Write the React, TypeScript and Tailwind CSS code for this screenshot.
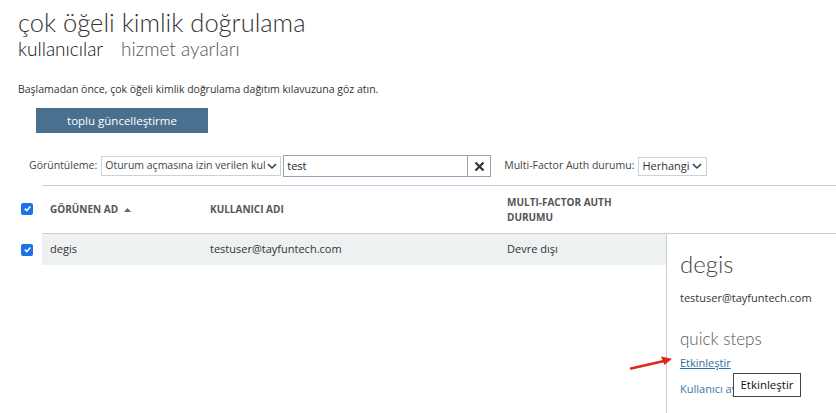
import React from "react";

function Check() {
  return (
    <span className="inline-flex h-[12px] w-[12px] items-center justify-center rounded-[2px] bg-[#1a73e8]">
      <svg width="9" height="9" viewBox="0 0 10 10">
        <path d="M2 5.2 L4.2 7.4 L8.2 2.8" stroke="#fff" strokeWidth="1.8" fill="none" />
      </svg>
    </span>
  );
}

function Chevron() {
  return (
    <svg width="10" height="7" viewBox="0 0 10 7">
      <path d="M1 1.2 L5 5 L9 1.2" stroke="#444" strokeWidth="1.6" fill="none" />
    </svg>
  );
}

export default function App() {
  const font = { fontFamily: '"Segoe UI", "Open Sans", "Noto Sans", sans-serif' };
  const light = { fontFamily: '"Lato", "Open Sans", sans-serif' };
  return (
    <div className="relative h-[413px] w-[836px] overflow-hidden bg-white text-[#333]" style={font}>
      <div className="pl-[18px] pt-[6px]">
        <div className="text-[25.5px] font-light leading-[32px] text-[#333]" style={light}>çok öğeli kimlik doğrulama</div>
        <div className="flex gap-[18px] text-[19px] font-light leading-[22px]" style={light}>
          <span className="text-[#111]">kullanıcılar</span>
          <span className="text-[#555]">hizmet ayarları</span>
        </div>
        <div className="mt-[22px] text-[10.5px] leading-[15px] text-[#333]">
          Başlamadan önce, çok öğeli kimlik doğrulama dağıtım kılavuzuna göz atın.
        </div>
        <div className="ml-[18px] mt-[11px] flex h-[25px] w-[172px] items-center justify-center bg-[#4a7090] text-[11.5px] text-white">
          toplu güncelleştirme
        </div>
      </div>

      <div className="mt-[22px] flex items-center pl-[29px] text-[10.5px] text-[#444]">
        <span>Görüntüleme:</span>
        <div className="ml-[4px] flex h-[20px] w-[180px] items-center justify-between border border-[#c6d3dd] pl-[3px] pr-[3px]">
          <span className="overflow-hidden whitespace-nowrap">Oturum açmasına izin verilen kul</span>
          <span className="shrink-0 pl-[2px]"><Chevron /></span>
        </div>
        <div className="ml-[2px] flex h-[22px] w-[208px] items-stretch border border-[#8fa6ba]">
          <span className="flex-1 pl-[3px] text-[11px] leading-[20px] text-[#222]">test</span>
          <span className="flex w-[23px] items-center justify-center border-l border-[#8fa6ba]">
            <svg width="11" height="11" viewBox="0 0 11 11">
              <path d="M1.5 1.5 L9.5 9.5 M9.5 1.5 L1.5 9.5" stroke="#333" strokeWidth="2.2" />
            </svg>
          </span>
        </div>
        <span className="ml-[13px]">Multi-Factor Auth durumu:</span>
        <div className="ml-[4px] flex h-[19px] w-[69px] items-center justify-between border border-[#c6d3dd] pl-[3px] pr-[4px] text-[11px] text-[#333]">
          <span>Herhangi</span>
          <Chevron />
        </div>
      </div>

      <div className="ml-[42px] mt-[8px] border-t border-[#c8d0d6]" />
      <div className="flex h-[47px] items-center text-[10px] font-bold text-[#555]">
        <div className="w-[42px] pl-[21px]"><Check /></div>
        <div className="flex w-[168px] items-center gap-[6px] pl-[8px]">
          GÖRÜNEN AD
          <svg width="7" height="4" viewBox="0 0 7 4"><path d="M0 4 L3.5 0 L7 4Z" fill="#666" /></svg>
        </div>
        <div className="w-[297px]">KULLANICI ADI</div>
        <div className="w-[140px] leading-[15px]">MULTI-FACTOR AUTH<br />DURUMU</div>
      </div>
      <div className="ml-[42px] border-t border-[#c8d0d6]" />

      <div className="flex">
        <div className="w-[666px] shrink-0">
          <div className="flex h-[31px] items-center text-[11px] text-[#333]">
            <div className="flex w-[42px] pl-[21px]"><Check /></div>
            <div className="flex h-full flex-1 items-center bg-[#eef1f1]">
              <div className="w-[168px] pl-[8px]">degis</div>
              <div className="w-[297px]">testuser@tayfuntech.com</div>
              <div>Devre dışı</div>
            </div>
          </div>
        </div>
        <div className="h-[200px] flex-1 border-l border-[#c8d0d6] pl-[13px] pt-[16px]">
          <div className="text-[24px] font-light leading-[28px] text-[#444]" style={light}>degis</div>
          <div className="mt-[12px] text-[11px] text-[#333]">testuser@tayfuntech.com</div>
          <div className="mt-[21px] text-[17px] font-light leading-[22px] text-[#555]" style={light}>quick steps</div>
          <div className="mt-[5px] text-[11px] text-[#2a6ea6] underline">Etkinleştir</div>
          <div className="mt-[10px] w-[118px] overflow-hidden whitespace-nowrap text-[11px] text-[#3a76ab]">Kullanıcı ayarlarını yönet</div>
        </div>
      </div>

      <div className="absolute left-[733px] top-[373px] flex h-[24px] w-[68px] items-center justify-center border border-[#444] bg-white text-[11.5px] text-[#111]">
        Etkinleştir
      </div>
      <svg className="absolute left-[628px] top-[354px]" width="48" height="18" viewBox="0 0 48 18">
        <path d="M3 14.5 L36 7" stroke="#e0261f" strokeWidth="2.4" strokeLinecap="round" />
        <path d="M44 4.8 L33 2.5 L36.5 11 Z" fill="#e0261f" />
      </svg>
    </div>
  );
}
